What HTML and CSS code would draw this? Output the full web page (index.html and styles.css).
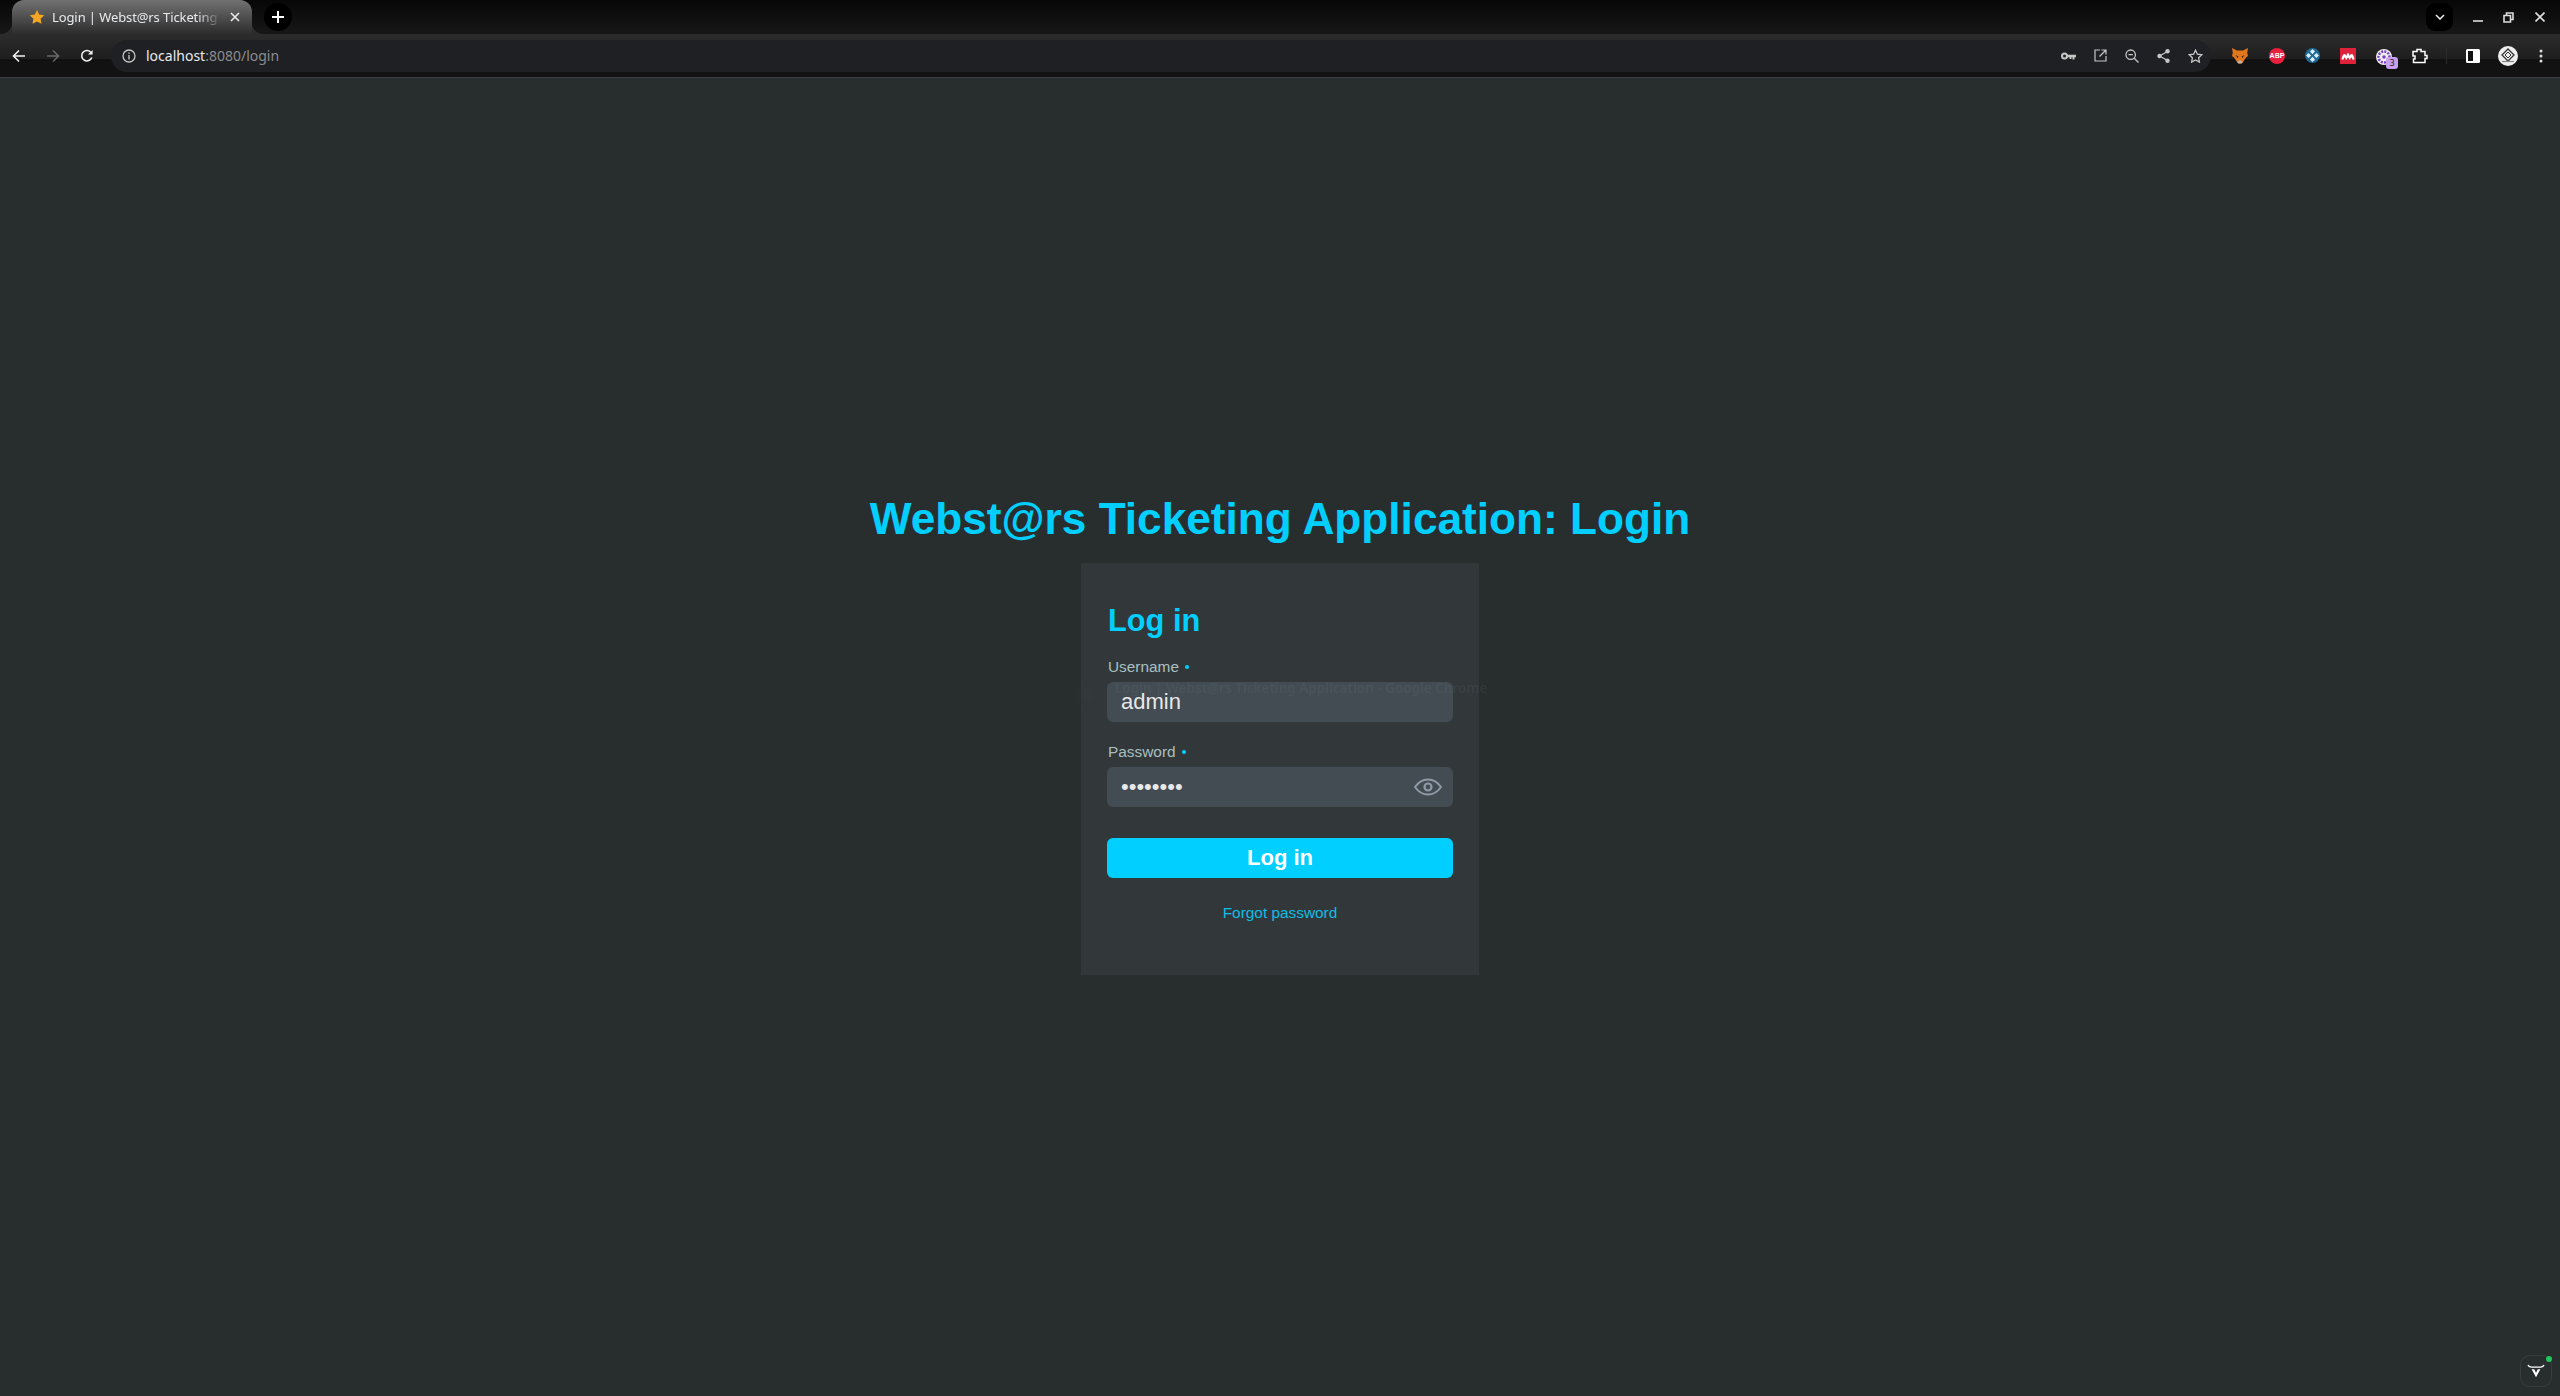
FILE: index.html
```html
<!DOCTYPE html>
<html>
    <head>
        <title>Login | Webst@rs Ticketing Application</title>
        <link rel="stylesheet" href="styles.css">
    </head>
    <body>
        <div class="browser-top">
            <div class="tabstrip">
                <div class="tab">
                    <svg class="tab-star" width="16" height="16" viewBox="0 0 16 16"><path d="M8 1l2.200 4.600 5 .7-3.600 3.500.9 5L8 12.400 3.500 14.800l.9-5L.8 6.300l5-.7z" fill="#f5a623"/></svg>
                    <span class="tab-title">Login | Webst@rs Ticketing</span>
                    <svg class="tab-close" width="10" height="10" viewBox="0 0 10 10"><path d="M1 1l8 8M9 1l-8 8" stroke="#e8eaed" stroke-width="1.600"/></svg>
                </div>
                <div class="newtab">
                    <svg width="12" height="12" viewBox="0 0 12 12"><path d="M6 0v12M0 6h12" stroke="#fff" stroke-width="2"/></svg>
                </div>
                <div class="tabstrip-space"></div>
                <div class="tabsearch">
                    <svg width="10" height="6" viewBox="0 0 10 6"><path d="M1 1l4 4 4-4" stroke="#e8eaed" stroke-width="1.600" fill="none"/></svg>
                </div>
                <div class="winctrl win-min"><svg width="10" height="2" viewBox="0 0 10 2"><path d="M0 1h10" stroke="#ddd" stroke-width="1.600"/></svg></div>
                <div class="winctrl win-max"><svg width="11" height="11" viewBox="0 0 11 11"><path d="M3.500 3V1h6.500v6.500H7.500M1 3.500h6.500V10H1z" stroke="#ddd" stroke-width="1.600" fill="none"/></svg></div>
                <div class="winctrl win-close"><svg width="10" height="10" viewBox="0 0 10 10"><path d="M.5.5l9 9M9.500.5l-9 9" stroke="#ddd" stroke-width="1.600"/></svg></div>
            </div>
            <div class="toolbar">
                <svg class="nav-btn" width="14" height="14" viewBox="0 0 14 14"><path d="M13 7H2M7 1.500L1.500 7 7 12.500" stroke="#f1f3f4" stroke-width="1.600" fill="none"/></svg>
                <svg class="nav-btn nav-fwd" width="14" height="14" viewBox="0 0 14 14"><path d="M1 7h11M7 1.500L12.500 7 7 12.500" stroke="#66686b" stroke-width="1.600" fill="none"/></svg>
                <svg class="nav-btn nav-reload" width="14" height="14" viewBox="0 0 14 14"><path d="M11.800 8.500A5.200 5.200 0 1 1 10.700 3.200" stroke="#f1f3f4" stroke-width="1.600" fill="none"/><path d="M12.600 1v4.600H8z" fill="#f1f3f4"/></svg>
                <div class="omnibox">
                    <svg class="omni-info" width="14" height="14" viewBox="0 0 14 14"><circle cx="7" cy="7" r="6" stroke="#c4c7c5" stroke-width="1.300" fill="none"/><path d="M7 6v4.500M7 3.500v1.300" stroke="#c4c7c5" stroke-width="1.400"/></svg>
                    <span class="url"><span class="url-host">localhost</span>:8080/login</span>
                    <div class="omni-space"></div>
                    <svg class="omni-icon" width="15" height="8" viewBox="0 0 15 8"><circle cx="3.500" cy="4" r="2.500" stroke="#c4c7c5" stroke-width="2" fill="none"/><path d="M6 2.800h9v2.400h-1.500V7.500h-2V5.200h-1V7h-2V5.200H6z" fill="#c4c7c5"/></svg>
                    <svg class="omni-icon" width="13" height="13" viewBox="0 0 13 13"><path d="M6 1H1v11h11V7M7.500 1H12v4.500M12 1L5.500 7.500" stroke="#c4c7c5" stroke-width="1.200" fill="none"/></svg>
                    <svg class="omni-icon" width="14" height="14" viewBox="0 0 14 14"><circle cx="5.700" cy="5.700" r="4.700" stroke="#c4c7c5" stroke-width="1.300" fill="none"/><path d="M9.200 9.200L13.500 13.500M3.500 5.700h4.400" stroke="#c4c7c5" stroke-width="1.300"/></svg>
                    <svg class="omni-icon" width="13" height="14" viewBox="0 0 13 14"><path d="M10.500 2.500L2.500 7l8 4.500" stroke="#c4c7c5" stroke-width="1.200" fill="none"/><circle cx="10.500" cy="2.300" r="2.200" fill="#c4c7c5"/><circle cx="2.500" cy="7" r="2.200" fill="#c4c7c5"/><circle cx="10.500" cy="11.700" r="2.200" fill="#c4c7c5"/></svg>
                    <svg class="omni-icon" width="15" height="14" viewBox="0 0 15 14"><path d="M7.500 1.200l1.900 4 4.400.6-3.200 3 .8 4.300-3.900-2.100-3.900 2.100.8-4.300-3.200-3 4.400-.6z" stroke="#c4c7c5" stroke-width="1.300" fill="none"/></svg>
                </div>
                <svg class="ext ext-fox" width="16" height="16" viewBox="0 0 16 16"><path d="M0 0l5 2.500h6L16 0l-.8 5 .8 3-2 1.500-3 4.500-1.500 1.500h-3L5 14 2 9.500 0 8l.8-3z" fill="#e2761b"/><path d="M5 14l2-1.500h2l2 1.500-1.500 1.500h-3z" fill="#c0ad9e"/><path d="M3.500 7l3 1.500-1 1.500zM12.500 7l-3 1.500 1 1.500z" fill="#3b2a1a"/></svg>
                <div class="ext ext-abp"><span>ABP</span></div>
                <svg class="ext ext-dots" width="15" height="15" viewBox="0 0 15 15"><circle cx="7.500" cy="7.500" r="7.500" fill="#1d6a96"/><rect x="5.700" y="1.800" width="3.600" height="3.600" fill="#dceef7" transform="rotate(45 7.500 3.600)"/><rect x="5.700" y="9.600" width="3.600" height="3.600" fill="#dceef7" transform="rotate(45 7.500 11.400)"/><rect x="1.800" y="5.700" width="3.600" height="3.600" fill="#dceef7" transform="rotate(45 3.600 7.500)"/><rect x="9.600" y="5.700" width="3.600" height="3.600" fill="#dceef7" transform="rotate(45 11.400 7.500)"/></svg>
                <svg class="ext ext-red" width="16" height="16" viewBox="0 0 16 16"><rect width="16" height="16" fill="#e0213a"/><path d="M1.500 11.500C2 8 3 6 4.500 6c1 0 1.500 1 2 2 .3-1.800.8-3 1.500-3s1.200 1.200 1.500 3c.5-1 1-2 2-2 1.500 0 2.500 2 3 5.500h-2.200c-.3-1.500-.6-2-1-2-.5 0-.8.800-1 2H9c-.2-1.200-.5-2-1-2s-.8.800-1 2H5.700c-.2-1.200-.5-2-1-2-.4 0-.7.500-1 2z" fill="#fff"/></svg>
                <div class="ext ext-purple">
                    <svg width="16" height="16" viewBox="0 0 16 16"><circle cx="8" cy="8" r="8" fill="#eee"/><circle cx="8" cy="8" r="5.500" fill="none" stroke="#7b3fc4" stroke-width="2.500" stroke-dasharray="2 1.200"/><circle cx="8" cy="8" r="1.800" fill="#7b3fc4"/></svg>
                    <span class="ext-badge">3</span>
                </div>
                <svg class="ext ext-puzzle" width="16" height="16" viewBox="0 0 16 16"><path d="M1 3.500h4V1.500h4v2h4v4h2v3h-2v4H1.500v-3.500h1.500v-3H1z" stroke="#fff" stroke-width="1.500" fill="none"/></svg>
                <div class="toolbar-sep"></div>
                <svg class="ext ext-panel" width="14" height="14" viewBox="0 0 14 14"><rect width="14" height="14" rx="1.500" fill="#fff"/><rect x="2" y="2" width="5" height="10" fill="#111"/></svg>
                <svg class="ext ext-avatar" width="20" height="20" viewBox="0 0 20 20"><circle cx="10" cy="10" r="10" fill="#eee"/><path d="M10 3l6 6-6 6-6-6z" fill="none" stroke="#333" stroke-width="1.300"/><path d="M10 6l3 3-3 3-3-3z" fill="none" stroke="#333" stroke-width="1"/><path d="M4 15.500h12" stroke="#888" stroke-width="1.200"/></svg>
                <svg class="ext ext-menu" width="4" height="14" viewBox="0 0 4 14"><circle cx="2" cy="2" r="1.500" fill="#ddd"/><circle cx="2" cy="7" r="1.500" fill="#ddd"/><circle cx="2" cy="12" r="1.500" fill="#ddd"/></svg>
            </div>
        </div>
        <main class="page">
            <h1 class="page-title">Webst@rs Ticketing Application: Login</h1>
            <form class="card">
                <h2 class="card-title">Log in</h2>
                <div class="field field-user">
                    <label class="field-label">Username<i class="req"></i></label>
                    <div class="input-box"><input class="input" type="text" value="admin"></div>
                </div>
                <div class="field field-pass">
                    <label class="field-label">Password<i class="req"></i></label>
                    <div class="input-box">
                        <input class="input" type="password" value="password">
                        <svg class="eye" width="28" height="18" viewBox="0 0 28 18"><path d="M1 9C4.500 4 9 1.500 14 1.500S23.500 4 27 9c-3.500 5-8 7.500-13 7.500S4.500 14 1 9z" fill="none" stroke="#8e9aa6" stroke-width="2"/><circle cx="14" cy="9" r="3.500" fill="none" stroke="#8e9aa6" stroke-width="2.200"/></svg>
                    </div>
                </div>
                <button class="btn" type="button">Log in</button>
                <a class="forgot">Forgot password</a>
                <div class="ghost">
                    <svg width="30" height="30" viewBox="0 0 32 32"><circle cx="16" cy="16" r="15" fill="#3a3f3a"/><circle cx="16" cy="16" r="7" fill="#34465a"/></svg>
                    <div class="ghost-text">Login | Webst@rs Ticketing Application - Google Chrome</div>
                </div>
            </form>
            <div class="float-widget">
                <svg width="18" height="14" viewBox="0 0 20 16"><path d="M1 1c.5 2 2 2.500 4 2.500h10c2 0 3.500-.5 4-2.500" stroke="#fff" stroke-width="1.500" fill="none"/><path d="M5 6l5 9 5-9h-3l-2 4-2-4z" fill="#fff"/></svg>
                <i class="float-dot"></i>
            </div>
        </main>
    </body>
</html>
```

FILE: styles.css
```css
html, body {
    margin: 0;
    height: 100%;
    overflow: hidden;
}
body {
    display: flex;
    flex-direction: column;
    background: #282e2e;
    font-family: 'Liberation Sans', Arial, sans-serif;
}
.browser-top {
    font-family: 'Noto Sans', sans-serif;
    background: #101010;
}
.tabstrip {
    height: 34px;
    display: flex;
    align-items: center;
    padding-left: 12px;
    background: linear-gradient(#070707, #171717);
}
.tab {
    position: relative;
    width: 240px;
    height: 34px;
    box-sizing: border-box;
    padding: 0 12px 0 17px;
    display: flex;
    align-items: center;
    border-radius: 12px 12px 0 0;
    background: linear-gradient(#727272, #2c2c2c);
    color: #e8eaed;
    font-size: 13px;
}
.tab::before, .tab::after {
    content: '';
    position: absolute;
    bottom: 0;
    width: 12px;
    height: 12px;
}
.tab::before {
    left: -12px;
    background: radial-gradient(circle at 0 0, transparent 12px, #2c2c2c 12.500px);
}
.tab::after {
    right: -12px;
    background: radial-gradient(circle at 100% 0, transparent 12px, #2c2c2c 12.500px);
}
.tab-star {
    flex: none;
    margin-right: 7px;
}
.tab-title {
    flex: 1;
    white-space: nowrap;
    letter-spacing: -.1px;
    -webkit-mask-image: linear-gradient(to left, transparent, #000 24px);
    mask-image: linear-gradient(to left, transparent, #000 24px);
}
.tab-close {
    flex: none;
    margin-left: 9px;
}
.newtab {
    width: 28px;
    height: 28px;
    margin-left: 12px;
    border-radius: 50%;
    background: #000;
    display: flex;
    align-items: center;
    justify-content: center;
}
.tabstrip-space {
    flex: 1;
}
.tabsearch {
    width: 27px;
    height: 28px;
    border-radius: 9px;
    background: #000;
    display: flex;
    align-items: center;
    justify-content: center;
}
.winctrl {
    display: flex;
    align-items: center;
    justify-content: center;
}
.win-min {
    margin-left: 20px;
    margin-top: 8px;
}
.win-max {
    margin-left: 20px;
}
.win-close {
    margin-left: 21px;
    margin-right: 15px;
}
.toolbar {
    height: 44px;
    display: flex;
    align-items: center;
    box-sizing: border-box;
    padding: 0 0 0 12px;
    border-bottom: 1px solid #3a3f3f;
    background: linear-gradient(#2c2c2c, #1e1e1e 25px, #0a0a0a 26px, #121212 27px);
}
.nav-btn {
    flex: none;
}
.nav-fwd {
    margin-left: 20px;
}
.nav-reload {
    margin-left: 20px;
}
.omnibox {
    flex: none;
    width: 2100px;
    height: 32px;
    margin-left: 17px;
    box-sizing: border-box;
    padding: 0 8px 0 11px;
    border-radius: 16px;
    background: #1f2023;
    display: flex;
    align-items: center;
}
.omni-info {
    flex: none;
}
.url {
    margin-left: 10px;
    font-size: 14px;
    color: #8a8c8e;
}
.url-host {
    color: #e8eaed;
}
.omni-space {
    flex: 1;
}
.omni-icon {
    flex: none;
    margin-left: 18px;
}
.ext {
    flex: none;
}
.ext-fox {
    margin-left: 21px;
}
.ext-abp {
    width: 16px;
    height: 16px;
    margin-left: 21px;
    background: #e8213f;
    border-radius: 50%;
    color: #fff;
    font: bold 7px 'Liberation Sans', sans-serif;
    display: flex;
    align-items: center;
    justify-content: center;
}
.ext-dots {
    margin-left: 20px;
}
.ext-red {
    margin-left: 20px;
}
.ext-purple {
    position: relative;
    width: 16px;
    height: 16px;
    margin-left: 20px;
}
.ext-badge {
    position: absolute;
    left: 10px;
    top: 9px;
    width: 12px;
    height: 12px;
    border-radius: 3px;
    background: #c9a0f0;
    color: #222;
    font-size: 9px;
    line-height: 12px;
    text-align: center;
}
.ext-puzzle {
    margin-left: 20px;
}
.toolbar-sep {
    width: 1px;
    height: 16px;
    margin-left: 18px;
    background: #2a2a2a;
}
.ext-panel {
    margin-left: 19px;
}
.ext-avatar {
    margin-left: 18px;
}
.ext-menu {
    margin-left: 21px;
}
.page {
    flex: 1;
    position: relative;
    display: flex;
    flex-direction: column;
    align-items: center;
    justify-content: center;
}
.page-title {
    margin: 0;
    height: 64px;
    line-height: 39px;
    font-size: 44.2px;
    font-weight: bold;
    color: #00cfff;
}
.card {
    position: relative;
    width: 398px;
    height: 412px;
    box-sizing: border-box;
    padding: 40px 26px 0;
    background: #323839;
}
.card-title {
    margin: 0;
    padding-left: 1px;
    font-size: 30.8px;
    line-height: 36px;
    color: #00cfff;
}
.field-label {
    display: block;
    padding-left: 1px;
    font-size: 15.4px;
    line-height: 18px;
    color: #a9bfc1;
}
.req {
    display: inline-block;
    width: 4px;
    height: 4px;
    margin-left: 6px;
    vertical-align: 3px;
    border-radius: 50%;
    background: #00cfff;
}
.field-user {
    margin-top: 19px;
}
.field-pass {
    margin-top: 21px;
}
.input-box {
    position: relative;
    height: 40px;
    margin-top: 6px;
    border-radius: 6px;
    background: #434c53;
}
.input {
    width: 100%;
    height: 100%;
    box-sizing: border-box;
    padding: 0 14px;
    border: 0;
    outline: 0;
    background: none;
    color: #e8e8e8;
    font-family: 'Liberation Sans', sans-serif;
    font-size: 22px;
}
.eye {
    position: absolute;
    right: 11px;
    top: 11px;
}
.btn {
    display: block;
    width: 100%;
    height: 40px;
    margin-top: 31px;
    border: 0;
    border-radius: 6px;
    background: #00cfff;
    color: #fff;
    font-family: 'Liberation Sans', sans-serif;
    font-size: 22px;
    font-weight: bold;
}
.forgot {
    display: block;
    margin-top: 26px;
    text-align: center;
    font-size: 15.4px;
    line-height: 18px;
    color: #0fbde6;
}
.ghost {
    position: absolute;
    left: -8px;
    top: 117px;
    display: flex;
    gap: 12px;
    opacity: .08;
    pointer-events: none;
}
.ghost-text {
    margin-top: -1px;
    font-family: 'Noto Sans', sans-serif;
    font-size: 13.5px;
    font-weight: 600;
    white-space: nowrap;
    color: #8fa0a8;
}
.float-widget {
    position: absolute;
    right: 8px;
    bottom: 9px;
    width: 32px;
    height: 32px;
    box-sizing: border-box;
    border: 1px solid #373d3d;
    border-radius: 10px;
    display: flex;
    align-items: center;
    justify-content: center;
}
.float-dot {
    position: absolute;
    right: -1px;
    top: 0;
    width: 6px;
    height: 6px;
    border-radius: 50%;
    background: #22c55e;
}
```
